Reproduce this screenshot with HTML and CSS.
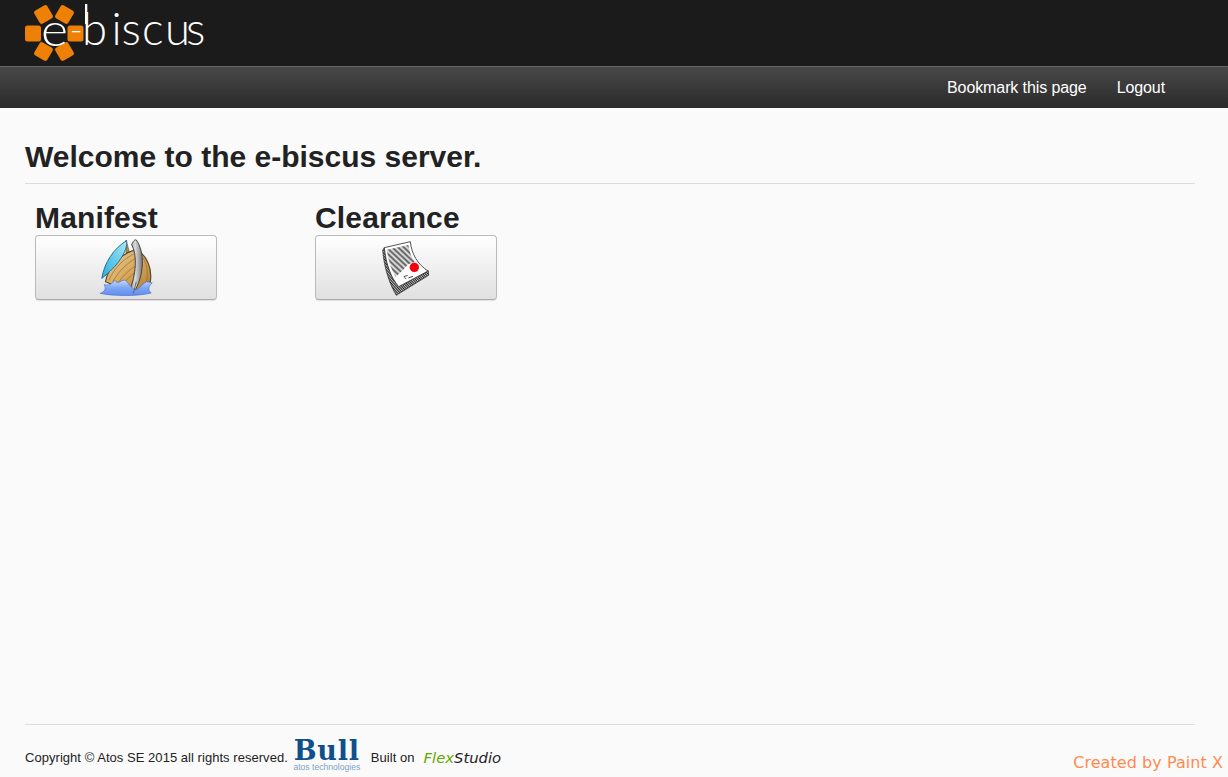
FILE: index.html
```html
<!DOCTYPE html>
<html lang="en">
<head>
<meta charset="utf-8">
<title>e-biscus</title>
<link rel="stylesheet" href="styles.css">
</head>
<body>
<header class="brand-bar">
  <svg class="logo" width="240" height="66" viewBox="0 0 240 66" role="img" aria-label="e-biscus">
    <g fill="#ee8005">
      <rect x="25" y="25.500" width="16" height="16" rx="2.500"/>
      <rect x="67.500" y="25.500" width="16" height="16" rx="2.500"/>
      <rect x="36" y="7" width="15" height="15" rx="2.500" transform="rotate(-30 43.500 14.500)"/>
      <rect x="57" y="7" width="15" height="15" rx="2.500" transform="rotate(30 64.500 14.500)"/>
      <rect x="36" y="44" width="15" height="15" rx="2.500" transform="rotate(30 43.500 51.500)"/>
      <rect x="57" y="44" width="15" height="15" rx="2.500" transform="rotate(-30 64.500 51.500)"/>
    </g>
    <text class="logo-e" x="41" y="46" textLength="27" lengthAdjust="spacingAndGlyphs">e</text>
    <text class="logo-dash" x="69.500" y="42">-</text>
    <rect class="logo-stem" x="85" y="4" width="2.300" height="20"/>
    <text class="logo-text" x="82 111.500 121.500 142 165 186" y="45">biscus</text>
  </svg>
</header>
<nav class="nav-bar">
  <a class="nav-link" href="#">Bookmark this page</a>
  <a class="nav-link" href="#">Logout</a>
</nav>
<main class="content">
  <h1 class="page-title">Welcome to the e-biscus server.</h1>
  <div class="tiles">
    <section class="tile">
      <h2 class="tile-title">Manifest</h2>
      <a class="tile-button" href="#">
        <svg width="55" height="59" viewBox="235 130 165 178" aria-hidden="true">
          <defs>
            <linearGradient id="hull" x1="0" y1="0" x2="1" y2="1">
              <stop offset="0" stop-color="#ecd29a"/><stop offset="0.6" stop-color="#d4a253"/><stop offset="1" stop-color="#a97a36"/>
            </linearGradient>
            <linearGradient id="sail" x1="1" y1="0" x2="0" y2="1">
              <stop offset="0" stop-color="#a8e8f8"/><stop offset="1" stop-color="#28aede"/>
            </linearGradient>
            <linearGradient id="water" x1="0" y1="0" x2="0" y2="1">
              <stop offset="0" stop-color="#c9dafc"/><stop offset="0.5" stop-color="#7fa5f5"/><stop offset="1" stop-color="#5f8eee"/>
            </linearGradient>
            <linearGradient id="silver" x1="0" y1="0" x2="1" y2="0">
              <stop offset="0" stop-color="#777"/><stop offset="0.45" stop-color="#dcdcdc"/><stop offset="1" stop-color="#777"/>
            </linearGradient>
          </defs>
          <path d="M316 136 L326 172 L316 176 Z" fill="#b98a45" stroke="#6b5230" stroke-width="2"/>
          <path d="M254 262 C264 212 302 178 345 165 C380 180 396 225 389 262 C380 286 350 296 320 290 Z" fill="url(#hull)" stroke="#55442a" stroke-width="3.500"/>
          <path d="M264 258 C282 218 310 192 345 175 M276 262 C294 230 318 206 348 190 M290 268 C306 244 326 226 350 210 M304 274 C316 256 330 242 352 228 M368 190 C380 215 384 240 378 262" fill="none" stroke="#8f6a30" stroke-width="2"/>
          <path d="M243 252 C250 205 280 160 318 138 C322 170 290 215 243 252 Z" fill="url(#sail)" stroke="#256f8c" stroke-width="3"/>
          <path d="M347 136 C372 170 374 240 338 297 L325 293 C348 240 350 180 333 150 C338 139 342 134 347 136 Z" fill="url(#silver)" stroke="#444" stroke-width="3"/>
          <path d="M238 297 C254 292 256 280 250 270 C262 276 274 268 282 258 C286 264 292 266 298 262 C304 258 310 256 315 258 C325 268 332 283 345 287 C358 283 366 266 378 262 L395 265 C385 275 380 286 392 296 C350 306 280 306 238 297 Z" fill="url(#water)" stroke="#3f6fd4" stroke-width="2"/>
          <path d="M338 297 L347 262" fill="none" stroke="#666" stroke-width="3"/>
        </svg>
      </a>
    </section>
    <section class="tile">
      <h2 class="tile-title">Clearance</h2>
      <a class="tile-button" href="#">
        <svg width="50" height="58" viewBox="230 130 150 172" aria-hidden="true">
          <defs>
            <pattern id="lines" width="6" height="3.600" patternUnits="userSpaceOnUse" patternTransform="rotate(-12)">
              <rect width="6" height="2" fill="#555"/>
            </pattern>
            <pattern id="edge" width="4" height="4" patternUnits="userSpaceOnUse" patternTransform="rotate(-32)">
              <rect width="4" height="2.200" fill="#222"/><rect y="2.200" width="4" height="1.800" fill="#bbb"/>
            </pattern>
          </defs>
          <path d="M235 162 C239 217 257 267 276 298 L373 238 L372 224 L283 272 C260 245 245 205 240 155 Z" fill="url(#edge)" stroke="#222" stroke-width="2"/>
          <path d="M240 155 L318 137 C322 175 340 205 371 225 L283 272 C260 245 245 205 240 155 Z" fill="#fff" stroke="#333" stroke-width="2.500"/>
          <path d="M248 161 L312 147 C316 170 322 186 332 198 L312 205 L296 222 L274 243 C260 220 251 192 248 161 Z" fill="url(#lines)"/>
          <ellipse cx="330" cy="214" rx="14" ry="14" fill="#f5000f"/>
          <path d="M298 242 L310 238 M300 245 L306 248 M312 246 L326 241" fill="none" stroke="#222" stroke-width="2.500"/>
        </svg>
      </a>
    </section>
  </div>
</main>
<footer class="footer">
  <span class="copyright">Copyright © Atos SE 2015 all rights reserved.</span>
  <span class="bull">
    <span class="bull-name">Bull</span>
    <span class="bull-sub">atos technologies</span>
  </span>
  <span class="built">Built on</span>
  <span class="flex"><span class="flex-green">Flex</span>Studio</span>
</footer>
<div class="credit">Created by Paint X</div>
</body>
</html>
```

FILE: styles.css
```css
* {
  box-sizing: border-box;
}

html,
body {
  height: 100%;
}

body {
  margin: 0;
  position: relative;
  display: flex;
  flex-direction: column;
  min-height: 777px;
  overflow: hidden;
  background: #fafafa;
  color: #222;
  font-family: "Liberation Sans", Arial, sans-serif;
}

.brand-bar {
  height: 66px;
  flex: none;
  background: #1b1b1b;
}

.logo {
  display: block;
}

.logo-text,
.logo-e,
.logo-dash {
  fill: #fff;
  font-family: Lato, sans-serif;
  font-weight: 300;
  font-size: 45.5px;
}

.logo-e {
  font-size: 46px;
}

.logo-dash {
  font-size: 36px;
}

.logo-stem {
  fill: #fff;
}

.nav-bar {
  height: 42px;
  flex: none;
  display: flex;
  justify-content: flex-end;
  align-items: center;
  gap: 30px;
  padding: 0 63px 0 0;
  border-top: 1px solid #666;
  background: linear-gradient(#484848, #2a2a2a);
}

.nav-link {
  color: #fff;
  font-size: 16px;
  letter-spacing: -0.1px;
  text-decoration: none;
}

.content {
  flex: 1;
  padding: 31px 33px 0 25px;
}

.page-title {
  margin: 0;
  height: 45px;
  border-bottom: 1px solid #ddd;
  font-size: 30px;
  line-height: 36px;
  font-weight: 700;
}

.tiles {
  display: flex;
  gap: 98px;
  padding: 16px 0 0 10px;
}

.tile {
  width: 182px;
}

.tile-title {
  margin: 0;
  font-size: 30px;
  line-height: 35px;
  font-weight: 700;
  letter-spacing: 0.15px;
}

.tile-button {
  display: flex;
  justify-content: center;
  align-items: center;
  height: 65px;
  border: 1px solid #bbb;
  border-bottom-color: #aaa;
  border-radius: 4px;
  background: linear-gradient(#fff, #e0e0e0);
  box-shadow: 0 1px 1px rgba(0, 0, 0, 0.1);
}

.footer {
  flex: none;
  height: 53px;
  margin: 0 33px 0 25px;
  display: flex;
  align-items: center;
  padding-top: 12px;
  border-top: 1px solid #ddd;
  font-size: 13px;
  letter-spacing: 0.04px;
}

.bull {
  display: flex;
  flex-direction: column;
  align-items: center;
  width: 68px;
  margin: -4px 0 0 5px;
  color: #0f4f8b;
}

.bull-name {
  font-family: "DejaVu Serif", serif;
  font-weight: 700;
  font-size: 27px;
  line-height: 24px;
  letter-spacing: 0.8px;
}

.bull-sub {
  font-size: 8.6px;
  line-height: 9px;
  letter-spacing: 0;
  color: #7aa5c5;
  white-space: nowrap;
}

.built {
  margin-left: 10px;
}

.flex {
  margin-left: 9px;
  font-family: "DejaVu Sans", sans-serif;
  font-style: oblique;
  font-size: 14.8px;
  letter-spacing: 0;
}

.flex-green {
  color: #62a800;
}

.credit {
  position: absolute;
  right: 5px;
  bottom: 4px;
  color: #ff8a50;
  font-family: "DejaVu Sans", sans-serif;
  font-size: 16px;
  letter-spacing: 0.06px;
  line-height: 20px;
}
```
